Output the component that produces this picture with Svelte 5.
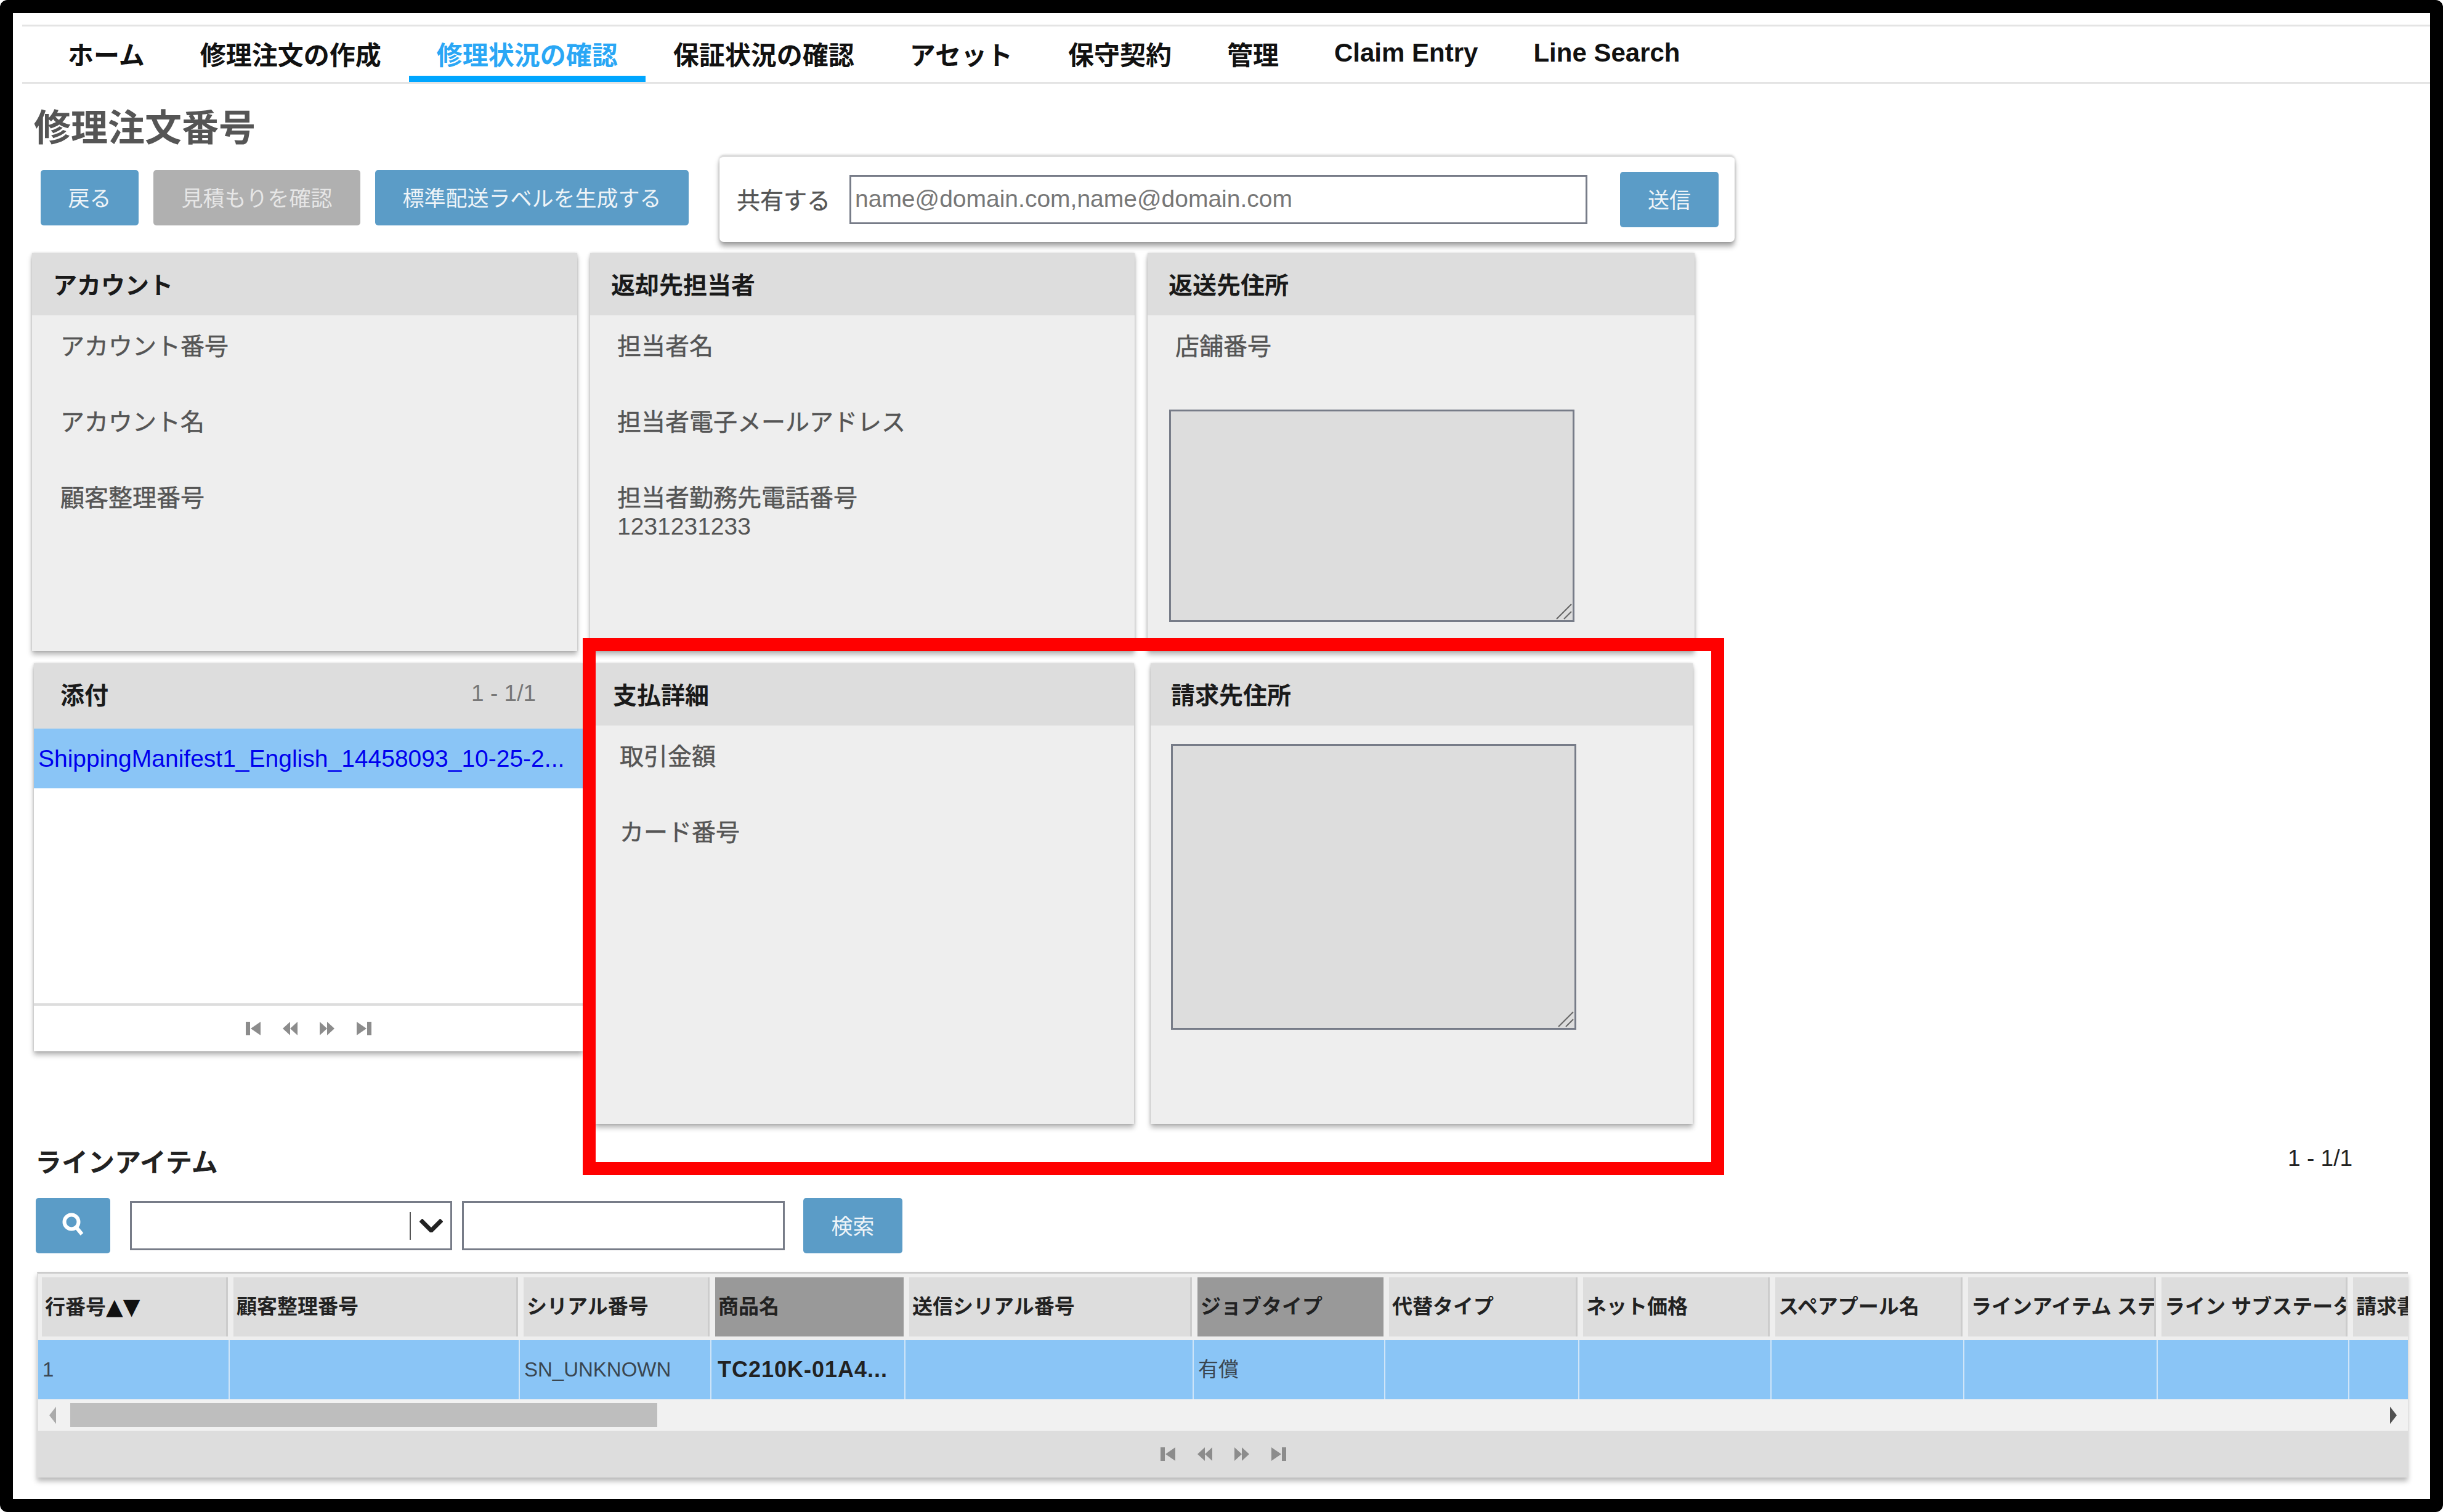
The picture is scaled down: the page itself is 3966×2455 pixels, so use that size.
<script>
	const tabs = ['ホーム', '修理注文の作成', '修理状況の確認', '保証状況の確認', 'アセット', '保守契約', '管理', 'Claim Entry', 'Line Search'];
	const activeTab = 2;

	const columns = [
		{ title: '行番号', arrows: true, width: 311, value: '1' },
		{ title: '顧客整理番号', width: 471, value: '' },
		{ title: 'シリアル番号', width: 311, value: 'SN_UNKNOWN' },
		{ title: '商品名', width: 315, value: 'TC210K-01A4...', sorted: true, bold: true },
		{ title: '送信シリアル番号', width: 468, value: '' },
		{ title: 'ジョブタイプ', width: 311, value: '有償', sorted: true },
		{ title: '代替タイプ', width: 315, value: '' },
		{ title: 'ネット価格', width: 312, value: '' },
		{ title: 'スペアプール名', width: 313, value: '' },
		{ title: 'ラインアイテム ステータス', width: 314, value: '' },
		{ title: 'ライン サブステータス', width: 311, value: '' },
		{ title: '請求書番号', width: 200, value: '' }
	];

	const gridCols = columns.map((c) => c.width + 'px').join(' ');

	// first, prev, next, last
	const pagerIcons = [
		'M1 2h7v22H1z M25 2v22L9 13z',
		'M13 2v22L1 13z M25 2v22L13 13z',
		'M1 2v22l12-11z M13 2v22l12-11z',
		'M1 2v22l16-11z M18 2h7v22h-7z'
	];
</script>

{#snippet pager()}
	<div class="pager">
		{#each pagerIcons as d}
			<svg viewBox="0 0 26 26" width="26" height="26"><path {d} /></svg>
		{/each}
	</div>
{/snippet}

{#snippet grip()}
	<svg class="grip" viewBox="0 0 26 26" width="26" height="26">
		<path d="M1 25L25 1M13 25L25 13" stroke="#666" stroke-width="2" fill="none" />
	</svg>
{/snippet}

<div class="frame">
	<nav class="tabs">
		{#each tabs as tab, i}
			<span class="tab" class:active={i === activeTab}>{tab}</span>
		{/each}
	</nav>

	<h1>修理注文番号</h1>

	<div class="toolbar">
		<button class="btn back">戻る</button>
		<button class="btn quote">見積もりを確認</button>
		<button class="btn label">標準配送ラベルを生成する</button>
		<div class="share">
			<span class="share-label">共有する</span>
			<input class="share-input" placeholder="name@domain.com,name@domain.com" />
			<button class="btn send">送信</button>
		</div>
	</div>

	<div class="row top">
		<section class="panel account">
			<header>アカウント</header>
			<div class="body">
				<div class="field">アカウント番号</div>
				<div class="field">アカウント名</div>
				<div class="field">顧客整理番号</div>
			</div>
		</section>
		<section class="panel contact">
			<header>返却先担当者</header>
			<div class="body">
				<div class="field">担当者名</div>
				<div class="field">担当者電子メールアドレス</div>
				<div class="field">担当者勤務先電話番号<span class="value">1231231233</span></div>
			</div>
		</section>
		<section class="panel ship">
			<header>返送先住所</header>
			<div class="body">
				<div class="field">店舗番号</div>
				<div class="address ship-address">
					<textarea></textarea>
					{@render grip()}
				</div>
			</div>
		</section>
	</div>

	<div class="row bottom">
		<section class="attach">
			<header><span>添付</span><span class="count">1 - 1/1</span></header>
			<div class="files">
				<div class="file"><span class="file-link">ShippingManifest1_English_14458093_10-25-2...</span></div>
			</div>
			{@render pager()}
		</section>
		<section class="panel payment">
			<header>支払詳細</header>
			<div class="body">
				<div class="field">取引金額</div>
				<div class="field">カード番号</div>
			</div>
		</section>
		<section class="panel billing">
			<header>請求先住所</header>
			<div class="body">
				<div class="address bill-address">
					<textarea></textarea>
					{@render grip()}
				</div>
			</div>
		</section>
	</div>

	<div class="lines-head">
		<h2>ラインアイテム</h2>
		<span class="lines-count">1 - 1/1</span>
	</div>

	<div class="search">
		<button class="btn search-icon" aria-label="検索">
			<svg viewBox="0 0 40 40" width="40" height="40">
				<circle cx="17" cy="16" r="11.5" fill="none" stroke="#fff" stroke-width="6" />
				<path d="M25 25l9 11" stroke="#fff" stroke-width="6" fill="none" />
			</svg>
		</button>
		<div class="select">
			<span class="select-divider"></span>
			<svg viewBox="0 0 38 22" width="38" height="22">
				<path d="M2 2l17 17L36 2" fill="none" stroke="#222" stroke-width="7" />
			</svg>
		</div>
		<input class="search-input" />
		<button class="btn find">検索</button>
	</div>

	<div class="table">
		<div class="thead" style="grid-template-columns: {gridCols}">
			{#each columns as col}
				<div class="th" class:sorted={col.sorted}>{col.title}{#if col.arrows}<span class="arrows">▲▼</span>{/if}</div>
			{/each}
		</div>
		<div class="tr" style="grid-template-columns: {gridCols}">
			{#each columns as col}
				<div class="td" class:bold={col.bold}>{col.value}</div>
			{/each}
		</div>
		<div class="scrollbar">
			<svg class="arrow" viewBox="0 0 11 28" width="11" height="28"><path d="M11 0v28L0 14z" fill="#aaa" /></svg>
			<div class="thumb"></div>
			<svg class="arrow right" viewBox="0 0 11 28" width="11" height="28"><path d="M0 0v28l11-14z" fill="#505050" /></svg>
		</div>
		{@render pager()}
	</div>

	<div class="callout"></div>
</div>

<style>
	:global(body) {
		margin: 0;
		background: #fff;
	}

	* {
		box-sizing: border-box;
	}

	.frame {
		position: relative;
		width: 3966px;
		height: 2455px;
		border: 21px solid #000;
		border-radius: 12px;
		background: #fff;
		overflow: hidden;
		font-family: 'Liberation Sans', 'Noto Sans CJK JP', sans-serif;
		font-size: 39px;
		color: #555;
	}

	.tabs {
		display: flex;
		height: 96px;
		margin: 19px 0 0 15px;
		padding-left: 29px;
		border-top: 3px solid #e4e4e4;
		border-bottom: 3px solid #e4e4e4;
	}

	.tab {
		display: flex;
		align-items: center;
		height: 90px;
		padding: 6px 45px 0;
		border-bottom: 10px solid transparent;
		font-size: 42px;
		font-weight: 600;
		color: #111;
		white-space: nowrap;
	}

	.tab.active {
		color: #2aa7f5;
		border-bottom-color: #00a6ff;
	}

	h1 {
		margin: 37px 0 0 34px;
		font-size: 60px;
		line-height: 72px;
		font-weight: 700;
		color: #555;
	}

	.toolbar {
		display: flex;
		align-items: center;
		gap: 24px;
		height: 141px;
		margin: 7px 0 0 45px;
	}

	.btn {
		border: none;
		border-radius: 5px;
		height: 90px;
		padding: 0 0 4px;
		background: #5b9cc7;
		color: #eef4f8;
		font: inherit;
		font-size: 35px;
		display: flex;
		align-items: center;
		justify-content: center;
	}

	.back { width: 159px; margin-top: -3px; }
	.quote { width: 336px; margin-top: -3px; background: #b0b0b0; color: #e6e6e6; }
	.label { width: 509px; margin-top: -3px; }

	.share {
		display: flex;
		align-items: center;
		width: 1648px;
		height: 141px;
		margin-left: 26px;
		padding-left: 28px;
		border-radius: 7px;
		border-top: 3px solid #ddd;
		background: #fff;
		box-shadow: 0 7px 9px rgba(0, 0, 0, 0.35), 0 0 4px rgba(0, 0, 0, 0.2);
	}

	.share-label {
		width: 183px;
		padding-bottom: 4px;
		font-size: 38px;
		flex: none;
		-webkit-text-stroke: 0.5px currentColor;
	}

	.share-input {
		width: 1198px;
		height: 80px;
		padding: 0 6px 3px;
		border: 3px solid #777c88;
		font: inherit;
		outline: none;
	}

	.share-input::placeholder {
		color: #777;
		opacity: 1;
	}

	.send {
		width: 160px;
		margin-left: 53px;
	}

	.row {
		display: flex;
		align-items: flex-start;
	}

	.top {
		gap: 21px;
		margin: 18px 0 0 31px;
	}

	.bottom {
		margin: 20px 0 0 34px;
	}

	.panel {
		background: #eee;
		box-shadow: 0 6px 8px rgba(0, 0, 0, 0.28), 0 0 4px rgba(0, 0, 0, 0.18);
	}

	.panel header,
	.attach header {
		display: flex;
		align-items: center;
		height: 101px;
		padding: 0 0 3px 34px;
		background: #ddd;
		font-weight: 700;
		color: #1a1a1a;
	}

	.account { width: 885px; height: 646px; }
	.contact { width: 884px; height: 646px; }
	.ship { width: 888px; height: 646px; }
	.payment { width: 875px; height: 748px; margin-left: 20px; }
	.billing { width: 880px; height: 748px; margin-left: 27px; }

	.payment header { padding-left: 29px; }
	.billing header { padding-left: 33px; }

	.body {
		padding: 28px 0 0 46px;
	}

	.field {
		height: 123px;
		font-size: 39px;
		line-height: 46px;
		color: #555;
		-webkit-text-stroke: 0.5px currentColor;
	}

	.value {
		display: block;
		-webkit-text-stroke: 0;
	}

	.contact .body {
		padding-left: 44px;
	}

	.payment .body {
		padding-left: 40px;
	}

	.ship .body {
		padding-left: 35px;
	}

	.ship .field {
		padding-left: 10px;
	}

	.billing .body {
		padding: 30px 0 0 33px;
	}

	.address {
		position: relative;
		width: 658px;
	}

	.address textarea {
		display: block;
		width: 100%;
		height: 100%;
		margin: 0;
		border: 3px solid #777c88;
		background: #ddd;
		outline: none;
		resize: none;
	}

	.grip {
		position: absolute;
		right: 4px;
		bottom: 4px;
	}

	.ship-address {
		height: 345px;
		margin-top: 2px;
	}

	.bill-address {
		height: 464px;
	}

	.attach {
		display: flex;
		flex-direction: column;
		width: 891px;
		height: 630px;
		background: #fff;
		box-shadow: 0 6px 8px rgba(0, 0, 0, 0.28), 0 0 4px rgba(0, 0, 0, 0.18);
	}

	.attach header {
		flex: none;
		justify-content: space-between;
		height: 106px;
		padding: 0 76px 8px 43px;
	}

	.count {
		font-size: 37px;
		font-weight: 400;
		color: #777;
	}

	.files {
		flex: 1;
		border-bottom: 4px solid #ddd;
	}

	.file {
		display: flex;
		align-items: center;
		height: 97px;
		padding: 0 7px;
		background: #8ac5f6;
	}

	.file-link {
		color: #0000ee;
		font-size: 39px;
		white-space: nowrap;
	}

	.pager {
		display: flex;
		flex: none;
		align-items: center;
		justify-content: center;
		gap: 34px;
		height: 74px;
	}

	.pager path {
		fill: #8c8c8c;
	}

	.lines-head {
		display: flex;
		justify-content: space-between;
		align-items: center;
		height: 52px;
		margin: 33px 126px 0 36px;
	}

	h2 {
		margin: 0;
		font-size: 43px;
		font-weight: 700;
		color: #222;
	}

	.lines-count {
		font-size: 37px;
		color: #222;
		margin-top: -6px;
	}

	.search {
		display: flex;
		align-items: center;
		height: 90px;
		margin: 35px 0 0 37px;
	}

	.search-icon {
		width: 121px;
	}

	.select {
		display: flex;
		align-items: center;
		justify-content: flex-end;
		width: 523px;
		height: 80px;
		margin-left: 32px;
		padding-right: 12px;
		border: 3px solid #777c88;
	}

	.select-divider {
		width: 2px;
		height: 45px;
		margin-right: 14px;
		background: #555;
	}

	.search-input {
		width: 524px;
		height: 80px;
		margin-left: 16px;
		border: 3px solid #777c88;
		outline: none;
	}

	.find {
		width: 161px;
		margin-left: 30px;
	}

	.table {
		width: 3849px;
		margin: 30px 0 0 39px;
		overflow: hidden;
		background: #eee;
		border-top: 3px solid #ccc;
		border-left: 2px solid #ddd;
		box-shadow: 0 6px 8px rgba(0, 0, 0, 0.28);
	}

	.thead,
	.tr {
		display: grid;
		width: max-content;
	}

	.thead {
		height: 102px;
		padding: 6px 0 0;
		background: #eee;
	}

	.th {
		height: 96px;
		min-width: 0;
		padding: 0 0 0 5px;
		margin: 0 3px 0 6px;
		border-right: 3px solid #ccc;
		background: #ddd;
		font-size: 33px;
		line-height: 96px;
		font-weight: 700;
		color: #222;
		white-space: nowrap;
		overflow: hidden;
	}

	.th.sorted {
		background: #999;
		border-right: none;
	}

	.arrows {
		font-family: 'DejaVu Sans', sans-serif;
		font-size: 36px;
		color: #111;
	}

	.tr {
		margin-top: 6px;
		height: 96px;
		background: #8ac5f6;
	}

	.td {
		padding: 0 7px;
		border-right: 2px solid #cfe5f8;
		font-size: 33px;
		line-height: 96px;
		color: #3a4650;
		white-space: nowrap;
		overflow: hidden;
	}

	.td.bold {
		font-size: 36px;
		font-weight: 700;
		letter-spacing: 1px;
		color: #222;
		padding-left: 10px;
	}

	.scrollbar {
		display: flex;
		align-items: center;
		height: 51px;
		padding: 0 18px;
		background: #f1f1f1;
	}

	.thumb {
		width: 953px;
		height: 39px;
		margin-left: 23px;
		background: #bebebe;
	}

	.arrow.right {
		margin-left: auto;
	}

	.table .pager {
		height: 76px;
		background: #ddd;
	}

	.callout {
		position: absolute;
		left: 925px;
		top: 1015px;
		width: 1853px;
		height: 872px;
		border: 21px solid #f00;
		pointer-events: none;
	}
</style>
